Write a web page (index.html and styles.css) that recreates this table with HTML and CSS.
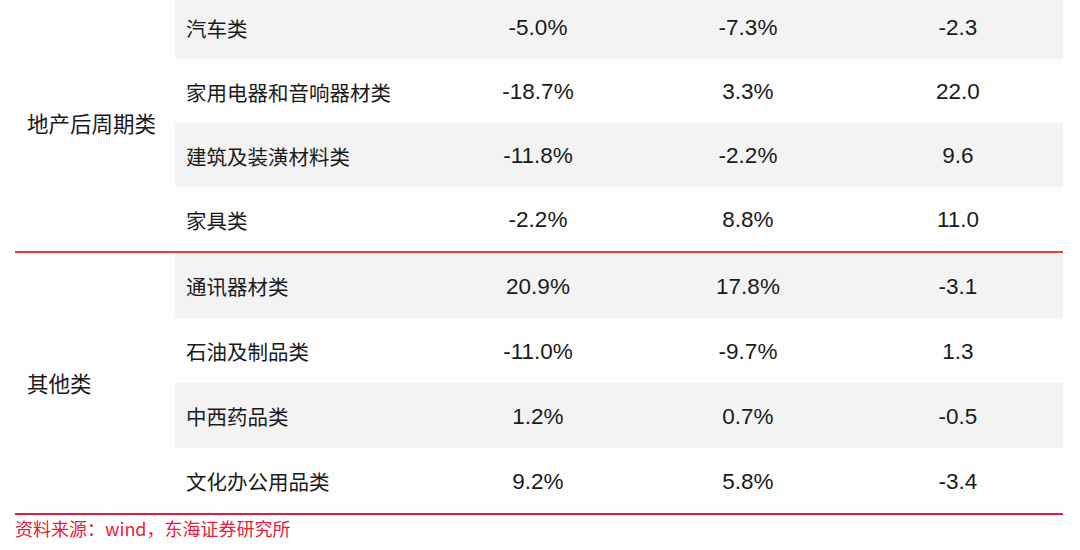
FILE: index.html
```html
<!DOCTYPE html>
<html lang="zh">
<head>
<meta charset="utf-8">
<link rel="stylesheet" href="styles.css">
</head>
<body>
<div class="page">
  <div class="table">
    <div class="group">
      <div class="cat">地产后周期类</div>
      <div class="rows">
        <div class="row grey first"><div class="name">汽车类</div><div class="num">-5.0%</div><div class="num">-7.3%</div><div class="num">-2.3</div></div>
        <div class="row"><div class="name">家用电器和音响器材类</div><div class="num">-18.7%</div><div class="num">3.3%</div><div class="num">22.0</div></div>
        <div class="row grey"><div class="name">建筑及装潢材料类</div><div class="num">-11.8%</div><div class="num">-2.2%</div><div class="num">9.6</div></div>
        <div class="row"><div class="name">家具类</div><div class="num">-2.2%</div><div class="num">8.8%</div><div class="num">11.0</div></div>
      </div>
    </div>
    <div class="sep"></div>
    <div class="group">
      <div class="cat">其他类</div>
      <div class="rows">
        <div class="row grey tall"><div class="name">通讯器材类</div><div class="num">20.9%</div><div class="num">17.8%</div><div class="num">-3.1</div></div>
        <div class="row tall"><div class="name">石油及制品类</div><div class="num">-11.0%</div><div class="num">-9.7%</div><div class="num">1.3</div></div>
        <div class="row grey tall"><div class="name">中西药品类</div><div class="num">1.2%</div><div class="num">0.7%</div><div class="num">-0.5</div></div>
        <div class="row tall"><div class="name">文化办公用品类</div><div class="num">9.2%</div><div class="num">5.8%</div><div class="num">-3.4</div></div>
      </div>
    </div>
    <div class="bottom"></div>
  </div>
  <div class="source">资料来源：wind，东海证券研究所</div>
</div>
</body>
</html>
```

FILE: styles.css
```css
html, body {
  margin: 0;
  padding: 0;
  background: #ffffff;
}
body {
  font-family: "Noto Sans CJK SC", "Noto Sans", sans-serif;
  color: #1a1a1a;
  width: 1080px;
  height: 550px;
  overflow: hidden;
}
.page {
  padding-left: 15px;
  width: 1048px;
}
.table {
  background: #fdfdfd;
  margin-top: -5px;
}
.group {
  display: flex;
  align-items: stretch;
}
.cat {
  width: 160px;
  box-sizing: border-box;
  padding-left: 12px;
  display: flex;
  align-items: center;
  font-size: 21.5px;
  padding-bottom: 2px;
}
.rows {
  flex: 1;
  display: flex;
  flex-direction: column;
}
.row {
  display: grid;
  grid-template-columns: 258px 210px 210px 210px;
  height: 64px;
  align-items: center;
}
.row.tall {
  height: 65px;
}
.row.grey {
  background: #f3f3f3;
}
.name {
  padding-left: 11px;
  font-size: 20.5px;
  padding-top: 1px;
}
.num {
  text-align: center;
  font-family: "Liberation Sans", Arial, sans-serif;
  font-size: 22.5px;
  padding-top: 2px;
}
.sep {
  height: 2px;
  background: #f23a3c;
}
.bottom {
  height: 2px;
  background: #e41e3c;
}
.source {
  color: #e8203c;
  font-size: 18px;
  line-height: 24px;
  padding-top: 1px;
}
```
